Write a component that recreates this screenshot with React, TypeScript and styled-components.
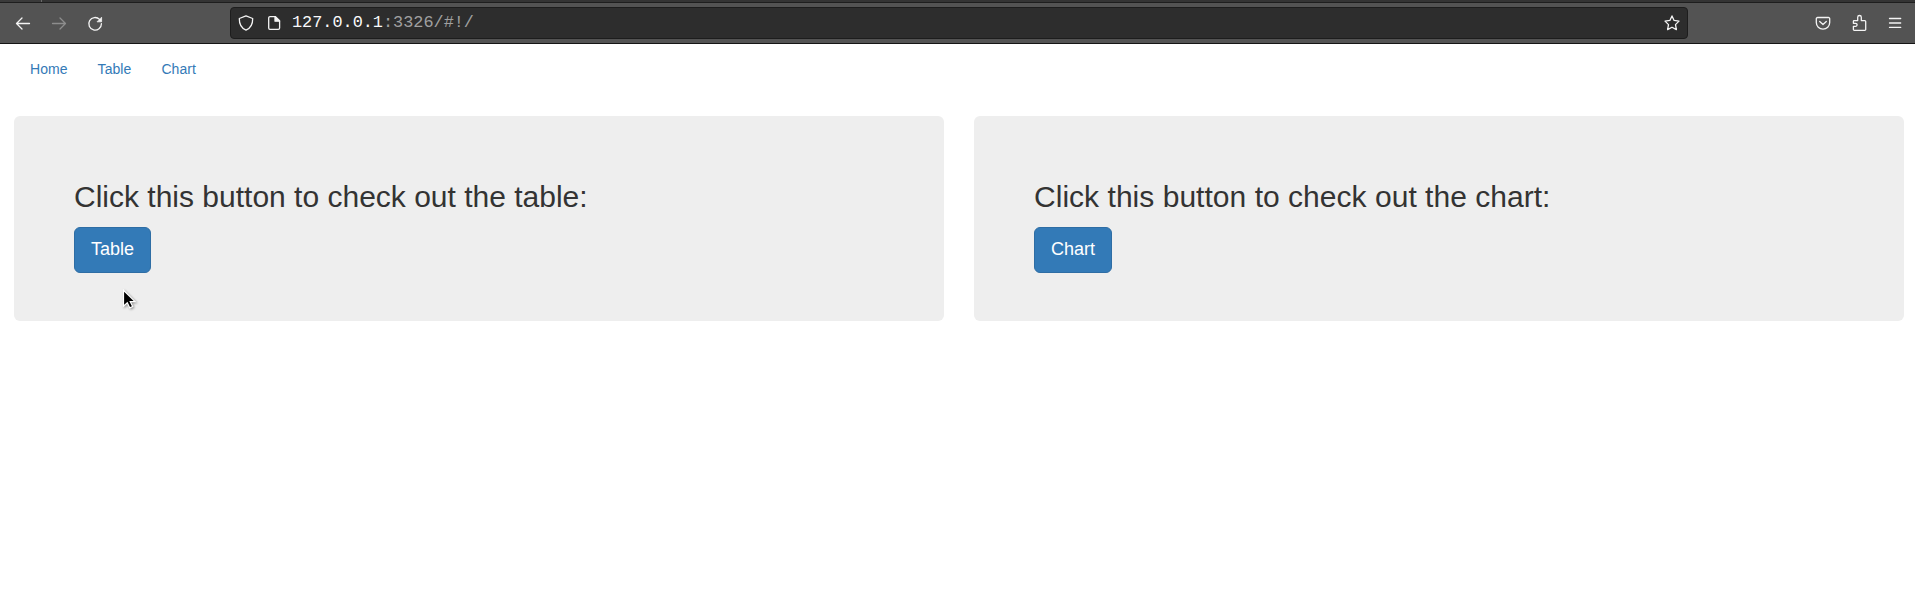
import React from "react";
import styled, { createGlobalStyle } from "styled-components";

const GlobalStyle = createGlobalStyle`
  * { box-sizing: border-box; }
  body {
    margin: 0;
    background: #fff;
    color: #333;
    font-family: "Liberation Sans", Arial, sans-serif;
    font-size: 14px;
    line-height: 20px;
    overflow: hidden;
  }
`;

const TabStrip = styled.div`
  display: flex;
  height: 3px;
  background: #343434;
  border-bottom: 1px solid #1e1e1e;
`;

const TabEdge = styled.div`
  width: 42px;
  height: 2px;
  background: #3a3a3a;
  border-right: 1px solid #6a6a6a;
`;

const Toolbar = styled.header`
  display: flex;
  align-items: center;
  height: 41px;
  padding: 0 12px 0 15px;
  background: #535353;
  border-bottom: 1px solid #151515;
`;

const IconGroup = styled.div<{ $gap: number }>`
  display: flex;
  align-items: center;
  gap: ${(p) => p.$gap}px;
`;

const Icon = styled.svg<{ $dim?: boolean }>`
  display: block;
  flex: none;
  width: 16px;
  height: 16px;
  fill: none;
  stroke: ${(p) => (p.$dim ? "#8d8d8d" : "#f4f4f4")};
  stroke-width: 1.3;
  stroke-linecap: round;
  stroke-linejoin: round;
  overflow: visible;
`;

const AddressBar = styled.div`
  display: flex;
  align-items: center;
  width: 1458px;
  height: 32px;
  margin: 0 127px 0 127px;
  padding: 0 7px;
  background: #2d2d2d;
  border: 1px solid #1d1d1d;
  border-radius: 4px;
`;

const Address = styled.div`
  flex: 1;
  margin: 0 0 0 10px;
  color: #a0a0a0;
  font: 16.85px/20px "Liberation Mono", monospace;
  white-space: pre;
`;

const Host = styled.span`
  color: #f9f9fa;
`;

const Nav = styled.nav`
  display: flex;
  gap: 30px;
  padding: 15px 30px 37px;
`;

const NavLink = styled.a`
  color: #337ab7;
  text-decoration: none;
  letter-spacing: 0.06px;
`;

const Panels = styled.main`
  display: grid;
  grid-template-columns: 930px 930px;
  gap: 30px;
  padding-left: 14px;
`;

const Jumbotron = styled.section`
  padding: 48px 60px;
  height: 205px;
  background: #eee;
  border-radius: 6px;
`;

const Title = styled.h2<{ $spacing?: number }>`
  margin: 16px 0 14px;
  font-size: 30px;
  line-height: 33px;
  font-weight: 400;
  white-space: nowrap;
  letter-spacing: ${(p) => p.$spacing ?? 0}px;
`;

const Button = styled.button<{ $width: number }>`
  display: block;
  width: ${(p) => p.$width}px;
  height: 46px;
  padding: 9px 0 11px;
  border: 1px solid #2e6da4;
  border-radius: 6px;
  background: #337ab7;
  color: #fff;
  font: 18px/24px "Liberation Sans", Arial, sans-serif;
  text-align: center;
`;

const Pointer = styled.svg`
  position: absolute;
  left: 122px;
  top: 289px;
  width: 15px;
  height: 21px;
  filter: drop-shadow(1px 1px 1px rgba(0, 0, 0, 0.4));
`;

export default function App() {
  return (
    <>
      <GlobalStyle />
      <TabStrip>
        <TabEdge />
      </TabStrip>
      <Toolbar>
        <IconGroup $gap={20}>
          <Icon viewBox="0 0 16 16"><path d="M14.5 8.5H1.5M7 3 1.5 8.5 7 14" /></Icon>
          <Icon viewBox="0 0 16 16" $dim><path d="M1.5 8.5h13M9 3l5.5 5.5L9 14" /></Icon>
          <Icon viewBox="0 0 16 16">
            <path d="M14.4 8.7A6.3 6.3 0 1 1 12.6 4.4" />
            <path d="M14.6 2.6v4.2h-4.2z" fill="#f4f4f4" strokeWidth="0.8" />
          </Icon>
        </IconGroup>
        <AddressBar>
          <IconGroup $gap={12}>
            <Icon viewBox="0 0 16 16"><path d="M8 .9 14.7 3.5C14.8 9 12.6 13.2 8 15.2 3.4 13.2 1.2 9 1.3 3.5Z" /></Icon>
            <Icon viewBox="0 0 16 16">
              <path d="M4 1.6h5.5l4.1 4.1v7.4a1.3 1.3 0 0 1-1.3 1.3H4a1.3 1.3 0 0 1-1.3-1.3V2.9A1.3 1.3 0 0 1 4 1.6Z" />
              <path d="M9 1.7v4.5h4.5z" fill="#f4f4f4" />
            </Icon>
          </IconGroup>
          <Address><Host>127.0.0.1</Host>:3326/#!/</Address>
          <Icon viewBox="0 0 16 16"><path d="m8 .9 2.1 4.5 4.9.7-3.5 3.5.9 5L8 12.2l-4.4 2.4.9-5L1 6.1l4.9-.7Z" /></Icon>
        </AddressBar>
        <IconGroup $gap={20}>
          <Icon viewBox="0 0 16 16">
            <path d="M2.5 2.5h11a1.2 1.2 0 0 1 1.2 1.2v3.8a6.7 6.7 0 0 1-13.4 0V3.7a1.2 1.2 0 0 1 1.2-1.2Z" />
            <path d="M4.7 6.5 8 9.5l3.3-3" />
          </Icon>
          <Icon viewBox="0 0 16 16">
            <path d="M3 5.6h3.7V2.3a1.8 1.8 0 0 1 3.6 0v3.3h3.5a.9.9 0 0 1 .9.9v8a.9.9 0 0 1-.9.9H3.3a.9.9 0 0 1-.9-.9v-3.2h2.2a1.5 1.5 0 0 0 0-3H2.4V6.2a.6.6 0 0 1 .6-.6Z" />
          </Icon>
          <Icon viewBox="0 0 16 16"><path d="M2.5 3.5h11.2M2.5 8h11.2M2.5 12.4h11.2" /></Icon>
        </IconGroup>
      </Toolbar>
      <Nav>
        <NavLink>Home</NavLink>
        <NavLink>Table</NavLink>
        <NavLink>Chart</NavLink>
      </Nav>
      <Panels>
        <Jumbotron>
          <Title>Click this button to check out the table:</Title>
          <Button $width={77}>Table</Button>
        </Jumbotron>
        <Jumbotron>
          <Title $spacing={0.03}>Click this button to check out the chart:</Title>
          <Button $width={78}>Chart</Button>
        </Jumbotron>
      </Panels>
      <Pointer viewBox="0 0 15 21">
        <path d="M1.5 1.2v16l3.8-3.5 2.5 5.2 2.9-1.4-2.5-4.9h4.9Z" fill="#000" stroke="#fff" strokeWidth="1.2" />
      </Pointer>
    </>
  );
}
